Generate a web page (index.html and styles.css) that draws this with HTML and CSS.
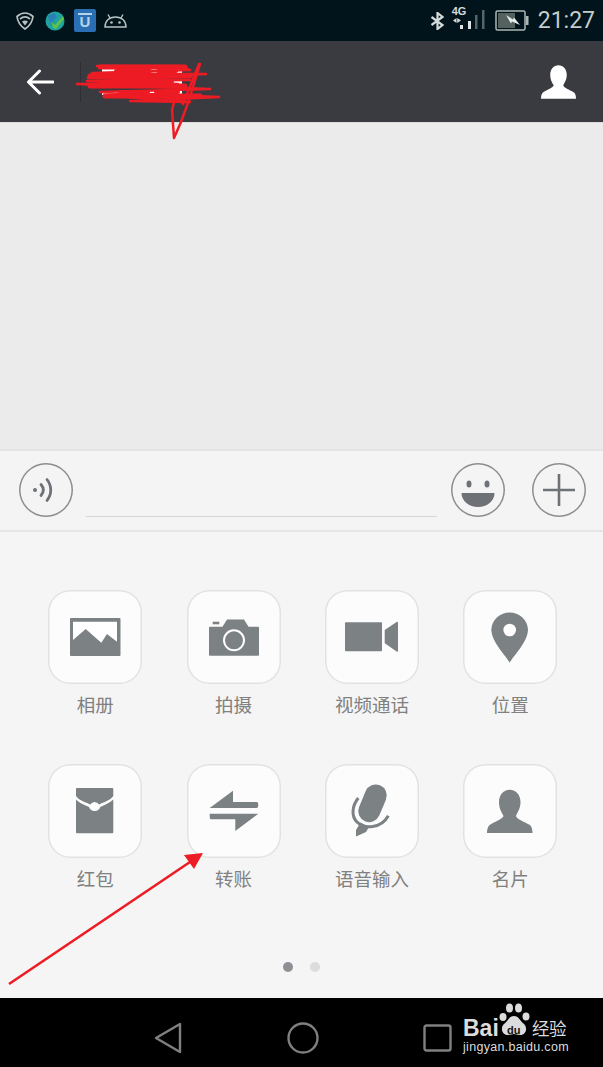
FILE: index.html
```html
<!DOCTYPE html>
<html lang="zh">
<head>
<meta charset="utf-8">
<title>聊天</title>
<link rel="stylesheet" href="styles.css">
</head>
<body>
<div class="page">
  <div class="status">
    <div class="status-left">
      <svg class="st-wifi" viewBox="0 0 18 19"><path d="M1 5.500C6 1 12 1 17 5.500C16.500 10 13.500 15 9 18C4.500 15 1.500 10 1 5.500Z" fill="none" stroke="#b9c2c2" stroke-width="1.700"/><path d="M4 8C7 5.500 11 5.500 14 8" fill="none" stroke="#b9c2c2" stroke-width="1.700"/><path d="M9 14.500L6 10.500C8 9.200 10 9.200 12 10.500Z" fill="#b9c2c2"/></svg>
      <svg class="st-globe" viewBox="0 0 20 20"><circle cx="10" cy="10" r="9.500" fill="#1fa3a0"/><path d="M3 5L9 2L12 6L8 10L10 15L6 14Z" fill="#2a7fb8"/><path d="M6 10L10 14L18 5L19 8L11 18L8 17Z" fill="#5cc24a"/></svg>
      <div class="st-u"><span class="st-u-glyph">U</span></div>
      <svg class="st-android" viewBox="0 0 23 15"><path d="M1 14C1 8 5 4 11.500 4C18 4 22 8 22 14Z" fill="none" stroke="#b9c2c2" stroke-width="1.400"/><path d="M6 5L4 1.500M17 5L19 1.500" stroke="#b9c2c2" stroke-width="1.400" fill="none"/><circle cx="7.500" cy="9.500" r="1.300" fill="#b9c2c2"/><circle cx="15.500" cy="9.500" r="1.300" fill="#b9c2c2"/></svg>
    </div>
    <div class="status-right">
      <svg class="st-bt" viewBox="0 0 15 18"><path d="M1.500 5L12.500 13L7.500 17V1L12.500 5L1.500 13" fill="none" stroke="#d5dbdb" stroke-width="2.200"/></svg>
      <div class="st-net">
        <span class="st-4g">4G</span>
        <svg class="st-bars" viewBox="0 0 34 22"><path d="M1 13.500L4.500 11V16ZM9 13.500L5.200 11V16Z" fill="#d5dbdb"/><rect x="8" y="18" width="3" height="4" fill="#dfe5e5"/><rect x="16" y="14" width="3" height="8" fill="#dfe5e5"/><rect x="23" y="8" width="2.500" height="14" fill="#53666a"/><rect x="30" y="3" width="2.500" height="19" fill="#53666a"/></svg>
      </div>
      <svg class="st-batt" viewBox="0 0 34 21"><rect x="1" y="1" width="29" height="19" rx="1.500" fill="none" stroke="#aeb7b7" stroke-width="1.500"/><rect x="3" y="3" width="17" height="15" fill="#53625f"/><rect x="31" y="6" width="2.500" height="9" fill="#aeb7b7"/><path d="M11 5L18 9.500L19 7.500L25 15L17 11.500L16 13.500Z" fill="#e6ebeb"/></svg>
      <span class="st-time">21:27</span>
    </div>
  </div>

  <header class="topbar">
    <svg class="back" viewBox="0 0 28 26"><path d="M27 13H3M13.500 2L2.500 13L13.500 24" fill="none" stroke="#fff" stroke-width="3" stroke-linecap="round" stroke-linejoin="round"/></svg>
    <div class="top-sep"></div>
    <div class="top-title"><span class="tb1"></span><span class="tb2"></span><span class="tb3"></span></div>
    <svg class="top-person" viewBox="24 25.700 45.500 43.300"><use href="#i-person" fill="#fff"/></svg>
  </header>

  <main class="chat"></main>

  <div class="inputbar">
    <div class="round">
      <svg viewBox="0 0 54 54"><circle cx="16" cy="27" r="2" fill="#6e7276"/><path d="M22 21.500C25 25 25 29 22 32.500M28 16.500C33 23 33 31 28 37.500" fill="none" stroke="#6e7276" stroke-width="2.800" stroke-linecap="round"/></svg>
    </div>
    <div class="field"></div>
    <div class="round">
      <svg viewBox="0 0 54 54"><ellipse cx="18" cy="21" rx="2.500" ry="3.500" fill="#6e7276"/><ellipse cx="36" cy="21" rx="2.500" ry="3.500" fill="#6e7276"/><path d="M10.500 30H43.500C43.500 38 36 44 27 44C18 44 10.500 38 10.500 30Z" fill="#6e7276"/></svg>
    </div>
    <div class="round round-plus">
      <svg viewBox="0 0 54 54"><path d="M27 11V43M11 27H43" stroke="#6e7276" stroke-width="2.600" fill="none"/></svg>
    </div>
  </div>

  <section class="panel">
    <div class="grid">
      <div class="item">
        <div class="tile"><svg viewBox="0 0 94 94"><rect x="22" y="28" width="50.500" height="38" rx="1" fill="#7c8184"/><path d="M25 31.700H69V51.700L59 44L53.300 52.700L37.700 39L25 50Z" fill="#fff"/></svg></div>
        <span class="label">相册</span>
      </div>
      <div class="item">
        <div class="tile"><svg viewBox="0 0 94 94"><path d="M23 36.700H35.500L40 29.500H57L61.500 36.700H71Q72 36.700 72 37.700V64.700Q72 65.700 71 65.700H23Q22 65.700 22 64.700V37.700Q22 36.700 23 36.700Z" fill="#7c8184"/><rect x="25.700" y="31.700" width="6.600" height="2.600" fill="#7c8184"/><circle cx="47" cy="50.300" r="10" fill="none" stroke="#fff" stroke-width="2"/></svg></div>
        <span class="label">拍摄</span>
      </div>
      <div class="item">
        <div class="tile"><svg viewBox="0 0 94 94"><rect x="20" y="32.300" width="37" height="29" rx="1" fill="#7c8184"/><path d="M59.700 40L72 31.700Q73 31.500 73 33V60.500Q73 62 72 61.700L59.700 53.300Z" fill="#7c8184"/></svg></div>
        <span class="label">视频通话</span>
      </div>
      <div class="item">
        <div class="tile"><svg viewBox="0 0 94 94"><path d="M46.700 72.700C44 67 28.300 52 28.300 39.500A18.400 18.400 0 0 1 65 39.500C65 52 49.500 67 46.700 72.700Z" fill="#7c8184"/><circle cx="46.700" cy="40" r="6.300" fill="#fff"/></svg></div>
        <span class="label">位置</span>
      </div>
      <div class="item">
        <div class="tile"><svg viewBox="0 0 94 94"><path d="M28 25Q28 24 29 24H64.300Q65.300 24 65.300 25V32C62 36.500 56 38 51 40.500A5 5 0 0 0 42.300 40.500C37.500 38 31 36.500 28 32Z" fill="#7c8184"/><path d="M28 35.500C31 39 37 41 41 43A6 6 0 0 0 52.300 43C56.500 41 62 39 65.300 35.500V68.300Q65.300 69.300 64.300 69.300H29Q28 69.300 28 68.300Z" fill="#7c8184"/><circle cx="46.700" cy="43" r="3.500" fill="#fff"/></svg></div>
        <span class="label">红包</span>
      </div>
      <div class="item">
        <div class="tile"><svg viewBox="0 0 94 94"><path d="M46 26.700V38H70Q71.300 38 71.300 41Q71.300 44 70 44H22.700Z" fill="#7c8184"/><path d="M22.700 49.700H71.300L48.300 67V55.300H24Q22.700 55.300 22.700 52.500Z" fill="#7c8184"/></svg></div>
        <span class="label">转账</span>
      </div>
      <div class="item">
        <div class="tile"><svg viewBox="0 0 94 94"><rect x="36.500" y="19.800" width="22" height="39" rx="11" transform="rotate(22.600 47.500 39.300)" fill="#7c8184"/><path d="M33.300 34C27 42 26 52 32 58C39 65 56 65 63.300 51.700" fill="none" stroke="#7c8184" stroke-width="3"/><path d="M35.500 58.500L44 63L41 68L31 72.500L31 66Z" fill="#7c8184"/></svg></div>
        <span class="label">语音输入</span>
      </div>
      <div class="item">
        <div class="tile"><svg viewBox="0 0 94 94"><symbol id="i-person" viewBox="0 0 94 94" width="94" height="94"><path d="M46.700 25.700C53 25.700 57.500 31 57.500 38C57.500 45 54 49 53 52C53.500 55 62 58 67 61C69 63 69.500 66 69.500 69H24C24 66 24.500 63 26.500 61C31 58 39.500 55 40.500 52C39 49 36 45 36 38C36 31 40.500 25.700 46.700 25.700Z"/></symbol><use href="#i-person" fill="#7c8184"/></svg></div>
        <span class="label">名片</span>
      </div>
    </div>
    <div class="dots"><span class="dot dot-on"></span><span class="dot"></span></div>
  </section>

  <nav class="navbar">
    <svg class="nav-back" viewBox="0 0 28 32"><path d="M26 2V30L2 16Z" fill="none" stroke="#808080" stroke-width="2.400" stroke-linejoin="round"/></svg>
    <svg class="nav-home" viewBox="0 0 32 32"><circle cx="16" cy="16" r="14.500" fill="none" stroke="#808080" stroke-width="2.400"/></svg>
    <svg class="nav-recent" viewBox="0 0 29 28"><rect x="1.500" y="1.500" width="26" height="25" rx="2" fill="none" stroke="#808080" stroke-width="2.400"/></svg>
  </nav>

  <div class="wm">
    <svg class="wm-paw" viewBox="0 0 34 36"><g fill="#dcdcdc"><ellipse cx="6" cy="15" rx="3.500" ry="4"/><ellipse cx="12.500" cy="6" rx="3.500" ry="4.500"/><ellipse cx="21.500" cy="6" rx="3.500" ry="4.500"/><ellipse cx="29" cy="14.500" rx="3.500" ry="4"/><path d="M17 14C22 14 23 19 27 22C31 26 29 33 23 33C20 33 19 32 17 32C15 32 14 33 11 33C5 33 3 26 7 22C11 19 12 14 17 14Z"/></g></svg>
    <div class="wm-row"><span class="wm-bai">Bai</span><span class="wm-du">du</span><span class="wm-jy">经验</span></div>
    <div class="wm-url">jingyan.baidu.com</div>
  </div>

  <svg class="ink" viewBox="0 0 603 1067">
    <g fill="none" stroke="#ed1c24" stroke-linejoin="round" stroke-linecap="round">
      <path stroke-width="2.500" d="M97 66L178 66L190 70L92 73L206 74L88 78L190 80L87 81L178 84L77 84L210 89L100 92L219 97L130 101L190 102L112 96L170 96"/>
      <path stroke-width="5" d="M100 67H185M90 76H190M90 86H185M105 96H200"/>
      <path stroke-width="4" d="M116 71H150M158 71H176M116 81.500H172M120 92H148M156 92H178"/>
      <path stroke-width="2.500" d="M200 64L189 100L181 122L174 138L172 110L176 95L183 104L199 64"/>
    </g>
    <path d="M9 984L190 862" fill="none" stroke="#ed1c24" stroke-width="2.600"/>
    <path d="M203 853L184 855L194 869Z" fill="#ed1c24"/>
  </svg>
</div>
</body>
</html>
```
FILE: styles.css
```css
* { box-sizing: border-box; }
html, body { margin: 0; padding: 0; }
body { font-family: "Noto Sans CJK SC", "Noto Sans", sans-serif; background: #000; }
.page { position: relative; width: 603px; height: 1067px; overflow: hidden; display: flex; flex-direction: column; }
svg { display: block; }

/* status bar */
.status { height: 41px; background: #01141b; display: flex; justify-content: space-between; align-items: center; padding: 0 8px 0 16px; flex: none; }
.status-left { display: flex; align-items: center; }
.status-right { display: flex; align-items: center; height: 41px; }
.st-wifi { width: 18px; height: 19px; margin-right: 11px; }
.st-globe { width: 20px; height: 20px; margin-right: 9px; }
.st-u { position: relative; width: 22px; height: 23px; border-radius: 2px; background: #2a6fb3; margin-right: 8px; display: flex; align-items: center; justify-content: center; padding-top: 2px; }
.st-u::before { content: ""; position: absolute; left: 4px; right: 4px; top: 4px; height: 2px; background: #b5d5e6; }
.st-u-glyph { font: 700 15px/1 "Liberation Sans", sans-serif; color: #b5d5e6; }
.st-android { width: 23px; height: 15px; }
.st-bt { width: 15px; height: 18px; margin-right: 7px; }
.st-net { position: relative; width: 34px; height: 22px; margin-right: 9px; align-self: flex-start; margin-top: 7px; }
.st-4g { position: absolute; left: 0; top: -1px; font: 700 11px/11px "Liberation Sans", sans-serif; color: #d5dbdb; }
.st-bars { position: absolute; left: 0; top: 0; width: 34px; height: 22px; }
.st-batt { width: 34px; height: 21px; margin-right: 9px; }
.st-time { font: 400 23px/26px Roboto, sans-serif; color: #c5cccc; }

/* header */
.topbar { height: 81px; background: #3a3b40; display: flex; align-items: center; padding: 0 27px 0 26px; flex: none; }
.back { width: 28px; height: 26px; }
.top-sep { width: 1px; height: 40px; background: #2e2f33; margin-left: 26px; }
.top-title { position: relative; width: 80px; height: 26px; margin-left: 21px; flex: none; display: flex; flex-direction: column; justify-content: space-between; }
.tb1, .tb2, .tb3 { display: block; height: 4px; background: #fff; }
.top-person { width: 35px; height: 34px; margin-left: auto; }

/* chat */
.chat { height: 327px; background: #ebebeb; border-top: 1px solid #dcdcdc; flex: none; }

/* input */
.inputbar { height: 83px; background: #f4f4f4; border-top: 2px solid #e4e4e4; border-bottom: 2px solid #e6e6e6; display: flex; align-items: center; padding: 0 17px 1px 19px; flex: none; }
.round { width: 54px; height: 54px; border-radius: 50%; box-shadow: inset 0 0 0 1.500px #8b8e90; flex: none; }
.round svg { width: 54px; height: 54px; }
.field { width: 351px; height: 54px; margin: 0 14px 0 13px; border-bottom: 1px solid #d6d6d6; flex: none; }
.round-plus { margin-left: 27px; }

/* panel */
.panel { height: 466px; background: #f5f5f5; padding: 58px 46px 0 48.300px; flex: none; }
.grid { display: grid; grid-template-columns: repeat(4, 94px); grid-auto-rows: 174px; column-gap: 44.300px; height: 348px; }
.item { display: flex; flex-direction: column; align-items: center; }
.tile { width: 94px; height: 94px; border-radius: 22px; background: #fcfcfc; box-shadow: inset 0 0 0 1.500px #e2e2e2; flex: none; }
.tile svg { width: 94px; height: 94px; }
.label { margin-top: 7px; font-size: 18.500px; line-height: 26px; color: #808080; white-space: nowrap; }
.dots { display: flex; justify-content: center; gap: 17px; margin: 24px 0 0 -3px; }
.dot { width: 10px; height: 10px; border-radius: 50%; background: #dcdcdc; }
.dot-on { background: #8e9095; }

/* nav */
.navbar { flex: 1; background: #000; display: flex; align-items: center; padding: 10px 0 0 154px; }
.nav-back { width: 28px; height: 32px; }
.nav-home { width: 32px; height: 32px; margin-left: 105px; }
.nav-recent { width: 29px; height: 28px; margin-left: 104px; }

/* watermark over the nav bar */
.wm { position: absolute; left: 462px; top: 1002px; width: 110px; height: 56px; color: #dcdcdc; }
.wm-paw { position: absolute; left: 35px; top: 0; width: 34px; height: 36px; }
.wm-row { position: absolute; left: 1px; top: 14px; display: flex; align-items: center; height: 24px; }
.wm-bai { font: 700 23px/24px "Liberation Sans", sans-serif; width: 40px; }
.wm-du { position: absolute; left: 44px; top: 8px; font: 700 11px/12px "Liberation Sans", sans-serif; color: #111; }
.wm-jy { font-size: 17.500px; line-height: 24px; margin-left: 29px; white-space: nowrap; letter-spacing: -0.500px; }
.wm-url { position: absolute; left: 1px; top: 37px; font: 400 12.500px/16px "Liberation Sans", sans-serif; letter-spacing: 0.300px; white-space: nowrap; }

/* hand-drawn red marks on top of the screenshot */
.ink { position: absolute; left: 0; top: 0; width: 603px; height: 1067px; pointer-events: none; }
```
